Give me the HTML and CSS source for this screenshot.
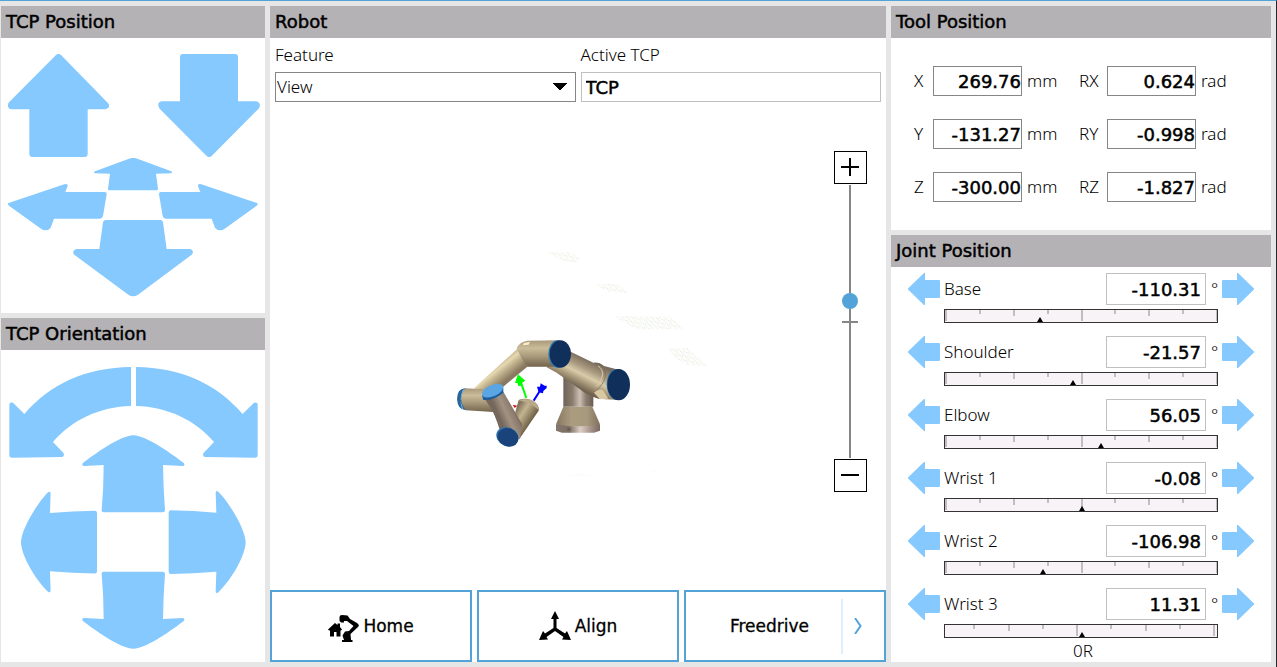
FILE: index.html
```html
<!DOCTYPE html>
<html lang="en">
<head>
<meta charset="utf-8">
<title>Move</title>
<link rel="stylesheet" href="styles.css">
</head>
<body>
<svg class="defs" aria-hidden="true">
  <symbol id="jog" viewBox="0 0 32 32"><path d="M0 15.500L16 0H17V7H31Q32 7 32 8V24Q32 25 31 25H17V32H16L0 16.500Z"/></symbol>
  <symbol id="ticks" viewBox="1 0 272 12" preserveAspectRatio="none"><path d="M1 0h2v11h-2zM35 0h2v4h-2zM69 0h2v6h-2zM103 0h2v4h-2zM137 0h2v11h-2zM170 0h2v4h-2zM204 0h2v6h-2zM238 0h2v4h-2zM272 0h1v11h-1z"/></symbol>
  <symbol id="ticks-wrap" viewBox="1 0 272 12" preserveAspectRatio="none"><path d="M29 0h2v4h-2zM64 0h2v6h-2zM98 0h2v4h-2zM132 0h2v11h-2zM166 0h2v4h-2zM201 0h2v6h-2zM235 0h2v4h-2zM269 0h2v11h-2z"/></symbol>
</svg>
<main class="screen">
  <div class="column">
    <section class="panel">
      <h2 class="panel-title">TCP Position</h2>
      <div class="pad-position">
        <div class="pad-row">
          <button class="arrow z-up" aria-label="Z up"><svg viewBox="24 162 303 309"><path d="M168 165Q175 158 183 165L323 308Q330 316 326 322Q322 328 314 328H263V462Q263 471 254 471H97Q88 471 88 462V328H35Q27 328 24 320Q23 312 27 307Z"/></svg></button>
          <button class="arrow z-down" aria-label="Z down"><svg viewBox="474 162 306 309"><path d="M620 468Q627 475 635 468L776 326Q782 318 778 310Q774 304 767 304H714V171Q714 162 705 162H549Q540 162 540 171V304H487Q477 304 475 312Q474 320 479 326Z"/></svg></button>
        </div>
        <div class="pad-cross">
          <button class="arrow y-away" aria-label="Away"><svg viewBox="282 474 234 99"><path d="M391 475Q399 472 408 475L514 514Q518 517 514 520L468 521L474 566Q474 571 469 571H328Q323 571 324 566L330 521L285 520Q279 518 285 514Z"/></svg></button>
          <button class="arrow x-left" aria-label="Left"><svg viewBox="24 552 297 141"><path d="M26 609L193 553Q204 550 203 558L196 576H314Q321 577 320 583L309 648Q307 656 299 656H162L152 683Q146 691 136 691Q129 691 124 687L27 617Q21 612 26 609Z"/></svg></button>
          <button class="arrow x-right" aria-label="Right"><svg viewBox="474 552 300 141"><path transform="translate(797 0) scale(-1 1)" d="M26 609L193 553Q204 550 203 558L196 576H314Q321 577 320 583L309 648Q307 656 299 656H162L152 683Q146 691 136 691Q129 691 124 687L27 617Q21 612 26 609Z"/></svg></button>
          <button class="arrow y-near" aria-label="Towards"><svg viewBox="219 660 360 231"><path d="M318 660H481Q488 660 489 667L500 747H568Q578 748 579 757Q578 762 574 765L414 884Q399 894 385 884L224 765Q218 761 220 755Q222 748 231 747H298L309 667Q311 660 318 660Z"/></svg></button>
        </div>
      </div>
    </section>
    <section class="panel grow">
      <h2 class="panel-title">TCP Orientation</h2>
      <div class="pad-orientation">
        <button class="arrow roll-left" aria-label="Rotate counterclockwise"><svg viewBox="27 156 366 273"><path d="M393 156V273C300 275 215 315 159 381L191 415Q194 424 186 426L36 428Q28 428 28 420V268Q29 260 39 263L73 297C150 207 260 157 393 156Z"/></svg></button>
        <button class="arrow roll-right" aria-label="Rotate clockwise"><svg viewBox="408 156 366 273"><path transform="translate(801 0) scale(-1 1)" d="M393 156V273C300 275 215 315 159 381L191 415Q194 424 186 426L36 428Q28 428 28 420V268Q29 260 39 263L73 297C150 207 260 157 393 156Z"/></svg></button>
        <button class="arrow tilt-up" aria-label="Tilt up"><svg viewBox="246 360 309 234"><path d="M400 361C440 362 520 420 552 445Q556 452 548 453L489 450Q490 520 495 585Q495 592 488 592H311Q304 592 305 585Q311 520 311 450L253 453Q244 453 248 445C280 420 360 362 400 361Z"/></svg></button>
        <button class="arrow tilt-left" aria-label="Tilt left"><svg viewBox="63 528 234 306"><path d="M63 682C64 640 115 560 145 530Q153 525 153 533L151 593Q220 587 287 586Q294 586 294 593V770Q294 777 287 777Q220 776 151 770L153 828Q153 836 146 833C110 800 64 725 63 682Z"/></svg></button>
        <button class="arrow tilt-right" aria-label="Tilt right"><svg viewBox="504 528 234 306"><path transform="translate(800 0) scale(-1 1)" d="M63 682C64 640 115 560 145 530Q153 525 153 533L151 593Q220 587 287 586Q294 586 294 593V770Q294 777 287 777Q220 776 151 770L153 828Q153 836 146 833C110 800 64 725 63 682Z"/></svg></button>
        <button class="arrow tilt-down" aria-label="Tilt down"><svg viewBox="246 768 309 234"><path transform="translate(0 1362) scale(1 -1)" d="M400 361C440 362 520 420 552 445Q556 452 548 453L489 450Q490 520 495 585Q495 592 488 592H311Q304 592 305 585Q311 520 311 450L253 453Q244 453 248 445C280 420 360 362 400 361Z"/></svg></button>
      </div>
    </section>
  </div>

  <section class="panel robot">
    <h2 class="panel-title">Robot</h2>
    <div class="fields">
      <label for="feature">Feature</label>
      <label for="tcp">Active TCP</label>
      <select id="feature" class="select"><option>View</option></select>
      <input id="tcp" class="tcp" type="text" value="TCP" readonly>
    </div>
    <div class="view">
      <svg class="scene" viewBox="0 0 616 488" role="img" aria-label="Robot arm">
        <defs>
          <linearGradient id="g-col"><stop offset="0" stop-color="#6f6358"/><stop offset=".3" stop-color="#8a7c6d"/><stop offset=".55" stop-color="#cdbfb4"/><stop offset=".75" stop-color="#8d7f70"/><stop offset="1" stop-color="#6a5c50"/></linearGradient>
          <linearGradient id="g-cone"><stop offset="0" stop-color="#857760"/><stop offset=".35" stop-color="#ab9c80"/><stop offset=".7" stop-color="#a89a7e"/><stop offset="1" stop-color="#80715c"/></linearGradient>
          <linearGradient id="g-flange"><stop offset="0" stop-color="#85776d"/><stop offset=".3" stop-color="#7c6e62"/><stop offset=".55" stop-color="#dccdc6"/><stop offset=".8" stop-color="#a39086"/><stop offset="1" stop-color="#79695e"/></linearGradient>
          <linearGradient id="g-elbow" x2="0" y2="1"><stop offset="0" stop-color="#a8997b"/><stop offset=".3" stop-color="#cbbd98"/><stop offset=".6" stop-color="#a89a7b"/><stop offset="1" stop-color="#73644d"/></linearGradient>
          <linearGradient id="g-fore" gradientUnits="userSpaceOnUse" x1="160" y1="370" x2="200" y2="420"><stop offset="0" stop-color="#a6987a"/><stop offset=".35" stop-color="#e6d8b0"/><stop offset=".65" stop-color="#b9aa87"/><stop offset="1" stop-color="#887960"/></linearGradient>
          <linearGradient id="g-upper" gradientUnits="userSpaceOnUse" x1="440" y1="355" x2="400" y2="435"><stop offset="0" stop-color="#796b5b"/><stop offset=".3" stop-color="#a7987e"/><stop offset=".55" stop-color="#d9ccaa"/><stop offset=".72" stop-color="#b1a283"/><stop offset="1" stop-color="#716350"/></linearGradient>
          <linearGradient id="g-wrist" gradientUnits="userSpaceOnUse" x1="170" y1="515" x2="225" y2="490"><stop offset="0" stop-color="#75675b"/><stop offset=".4" stop-color="#a19283"/><stop offset=".75" stop-color="#8a7b6c"/><stop offset="1" stop-color="#665749"/></linearGradient>
          <linearGradient id="g-tool" gradientUnits="userSpaceOnUse" x1="228" y1="510" x2="275" y2="540"><stop offset="0" stop-color="#857760"/><stop offset=".4" stop-color="#c4b590"/><stop offset="1" stop-color="#716349"/></linearGradient>
          <pattern id="speckle" width="18" height="12" patternUnits="userSpaceOnUse" patternTransform="rotate(11)"><path fill="#f8efa8" d="M1 1h3v3h-3zM10 7h3v3h-3z"/><path fill="#bfeaf8" d="M7 2h3v3h-3zM15 9h3v3h-3z"/><path fill="#f7d4e8" d="M4 8h3v3h-3z"/></pattern>
        </defs>
        <g transform="translate(170 138) scale(.33333)">
          <g fill="url(#speckle)">
            <path d="M320 37L390 37L420 54L410 68L375 64L345 50Z"/>
            <path d="M466 132L530 132L565 158L505 156Z"/>
            <path d="M520 228L690 230L730 268L590 268Z"/>
            <path d="M685 324L742 324L770 352L805 380L740 374L700 350Z"/>
            <path d="M380 703L430 701L470 708H400ZM610 693L650 690L660 698Z" opacity=".5"/>
          </g>
          <path fill="url(#g-col)" d="M370 400L460 420V500H370Z"/>
          <path fill="url(#g-cone)" d="M370 500H457L480 553L465 560H365L348 553Z"/>
          <path fill="url(#g-flange)" d="M348 553Q414 566 480 553V572L462 578H366L348 572Z"/>
          <path fill="#6b5d50" d="M382 564h10v8h-10z"/>
          <path fill="url(#g-upper)" d="M392 335L460 368Q478 366 492 378L530 388L535 480L475 476Q440 466 420 448L350 398L320 382L330 360Z"/>
          <path fill="#d8c9a2" d="M462 458Q485 440 492 455L505 476L480 478Z"/>
          <path fill="none" stroke="#75685a" stroke-width="2" d="M466 370Q492 370 496 396Q500 425 470 450"/>
          <path fill="none" stroke="#d7c8a5" stroke-width="3" d="M474 378Q488 385 488 405Q484 425 468 440"/>
          <ellipse cx="530" cy="433" rx="30" ry="46" fill="#2d79b4"/>
          <ellipse cx="536" cy="434" rx="34" ry="47" fill="#10305b"/>
          <path fill="url(#g-fore)" d="M102 445L234 325L262 380L190 440L150 462Z"/>
          <path fill="url(#g-elbow)" d="M230 325Q238 306 262 302L355 301V380H262Q248 362 240 345Z"/>
          <path fill="#f7ecc8" d="M252 309L270 305L266 314L248 316Z"/>
          <ellipse cx="353" cy="342" rx="28" ry="41" fill="#2d79b4"/>
          <ellipse cx="361" cy="342" rx="32" ry="41" fill="#10305b"/>
          <path fill="#28659a" d="M78 445Q52 444 51 477Q53 510 78 511L84 478Z"/>
          <path fill="#7ab5e6" d="M68 450L74 447L60 478L70 508L66 506Q56 480 68 450Z"/>
          <path fill="url(#g-elbow)" d="M76 445L140 448L160 516L78 511Q50 478 76 445Z"/>
          <path fill="#d61515" d="M218 494L232 497L224 504Z"/>
          <path fill="url(#g-tool)" d="M236 480Q252 472 276 480Q298 492 296 512L238 597L215 560L230 500Z"/>
          <path fill="#b8a988" d="M236 481Q262 470 285 487Q296 498 296 510Q274 490 236 481Z"/>
          <path fill="url(#g-wrist)" d="M132 474L190 455L246 552L240 598L180 572Q164 520 150 500Z"/>
          <path fill="#1c5d9b" d="M126 466L130 480Q160 482 190 458V442Z"/>
          <ellipse cx="158" cy="452" rx="34" ry="17" transform="rotate(-24 158 452)" fill="#5aa5e3"/>
          <ellipse cx="202" cy="590" rx="34" ry="28" transform="rotate(24 202 590)" fill="#2e73ae"/>
          <ellipse cx="204" cy="592" rx="32" ry="27" transform="rotate(24 204 592)" fill="#19437a"/>
          <path stroke="#0f0" stroke-width="6" fill="#0f0" d="M259 474L242 425"/><path fill="#0f0" d="M234 403L256 422L246 428L245 437L235 438L233 430L225 428Z"/>
          <path stroke="#00f" stroke-width="6" d="M281 482L299 454"/><path fill="#00f" d="M302 430L314 437H320V444L310 453L309 460L296 457L291 440H300Z"/>
        </g>
      </svg>
      <div class="zoom">
        <button class="zoom-btn" aria-label="Zoom in"><svg viewBox="0 0 18 18"><path d="M0 9H18M9 0V18"/></svg></button>
        <input class="zoom-range" type="range" min="0" max="100" value="58" aria-label="Zoom">
        <button class="zoom-btn" aria-label="Zoom out"><svg viewBox="0 0 18 18"><path d="M0 9H18"/></svg></button>
      </div>
    </div>
    <div class="actions">
      <button class="action"><svg class="icon-home" viewBox="0 0 31 27"><path d="M0 14.500L7 8L9.500 10V8.500H12V12L14 14.500L13 15.500H12.500V21.500H8.500V17H6V21.500H2V15.500H1Z"/><path d="M11.500 2Q11.500 0 14 0L19.500 .500L22 4L29 8Q32 10 30 12L22.500 19L23 25H24.500V27H14V25H16L14.500 20.500L17 16.500L21 16L25.500 11L19 6H16V7.500H13L11.500 6Z"/></svg>Home</button>
      <button class="action"><svg class="icon-align" viewBox="0 0 32 30"><path d="M16 0L20 8H17.500V17L26 22.500L28 20L32 29L23 28.500L24.500 26L16 20L7.500 26L9 28.500L0 29L4 20L6 22.500L14.500 17V8H12Z"/></svg>Align</button>
      <button class="action split"><span class="split-label">Freedrive</span><svg class="chevron" viewBox="0 0 8 16"><path d="M1 0L6.500 8L1 16"/></svg></button>
    </div>
  </section>

  <div class="column">
    <section class="panel">
      <h2 class="panel-title">Tool Position</h2>
      <div class="tool">
        <label for="x">X</label><input id="x" value="269.76"><span class="unit">mm</span>
        <label for="rx">RX</label><input id="rx" value="0.624"><span class="unit">rad</span>
        <label for="y">Y</label><input id="y" value="-131.27"><span class="unit">mm</span>
        <label for="ry">RY</label><input id="ry" value="-0.998"><span class="unit">rad</span>
        <label for="z">Z</label><input id="z" value="-300.00"><span class="unit">mm</span>
        <label for="rz">RZ</label><input id="rz" value="-1.827"><span class="unit">rad</span>
      </div>
    </section>
    <section class="panel grow">
      <h2 class="panel-title">Joint Position</h2>
      <div class="joints">
        <div class="joint">
          <button class="jog" aria-label="Base minus"><svg><use href="#jog"/></svg></button>
          <label for="j0">Base</label><input id="j0" value="-110.31"><span class="deg">°</span>
          <button class="jog plus" aria-label="Base plus"><svg><use href="#jog"/></svg></button>
          <div class="bar"><svg class="ticks"><use href="#ticks"/></svg><i class="mark" style="left:35%"></i></div>
        </div>
        <div class="joint">
          <button class="jog" aria-label="Shoulder minus"><svg><use href="#jog"/></svg></button>
          <label for="j1">Shoulder</label><input id="j1" value="-21.57"><span class="deg">°</span>
          <button class="jog plus" aria-label="Shoulder plus"><svg><use href="#jog"/></svg></button>
          <div class="bar"><svg class="ticks"><use href="#ticks"/></svg><i class="mark" style="left:47%"></i></div>
        </div>
        <div class="joint">
          <button class="jog" aria-label="Elbow minus"><svg><use href="#jog"/></svg></button>
          <label for="j2">Elbow</label><input id="j2" value="56.05"><span class="deg">°</span>
          <button class="jog plus" aria-label="Elbow plus"><svg><use href="#jog"/></svg></button>
          <div class="bar"><svg class="ticks"><use href="#ticks"/></svg><i class="mark" style="left:57.500%"></i></div>
        </div>
        <div class="joint">
          <button class="jog" aria-label="Wrist 1 minus"><svg><use href="#jog"/></svg></button>
          <label for="j3">Wrist 1</label><input id="j3" value="-0.08"><span class="deg">°</span>
          <button class="jog plus" aria-label="Wrist 1 plus"><svg><use href="#jog"/></svg></button>
          <div class="bar"><svg class="ticks"><use href="#ticks"/></svg><i class="mark" style="left:50.400%"></i></div>
        </div>
        <div class="joint">
          <button class="jog" aria-label="Wrist 2 minus"><svg><use href="#jog"/></svg></button>
          <label for="j4">Wrist 2</label><input id="j4" value="-106.98"><span class="deg">°</span>
          <button class="jog plus" aria-label="Wrist 2 plus"><svg><use href="#jog"/></svg></button>
          <div class="bar"><svg class="ticks"><use href="#ticks"/></svg><i class="mark" style="left:36%"></i></div>
        </div>
        <div class="joint">
          <button class="jog" aria-label="Wrist 3 minus"><svg><use href="#jog"/></svg></button>
          <label for="j5">Wrist 3</label><input id="j5" value="11.31"><span class="deg">°</span>
          <button class="jog plus" aria-label="Wrist 3 plus"><svg><use href="#jog"/></svg></button>
          <div class="bar"><svg class="ticks"><use href="#ticks-wrap"/></svg><i class="mark" style="left:50.400%"></i></div>
        </div>
        <p class="turns">0R</p>
      </div>
    </section>
  </div>
</main>
</body>
</html>
```
FILE: styles.css
```css
* { box-sizing: border-box; }

body {
  margin: 0;
  background: #e6e6e6;
  color: #000;
  font: 300 17px/24px "Noto Sans", "DejaVu Sans", sans-serif;
}

button, input, select { font: inherit; color: inherit; margin: 0; border-radius: 0; }
button { padding: 0; border: 0; background: none; cursor: pointer; }
svg { display: block; }
.defs { position: absolute; width: 0; height: 0; }

.screen {
  display: grid;
  grid-template-columns: 264fr 616fr 380fr;
  gap: 5px;
  min-height: 100vh;
  padding: 5px 5px 5px 1px;
  border-top: 1px solid #4fa3d8;
  border-right: 1px solid #26282c;
}

.column { display: flex; flex-direction: column; gap: 5px; min-width: 0; }
.panel { background: #fff; min-width: 0; }
.grow { flex: 1; }

.panel-title {
  margin: 0;
  padding: 0 5px;
  background: #b4b2b5;
  font-family: "DejaVu Sans", sans-serif;
  font-size: 18px;
  font-weight: 400;
  line-height: 32px;
  -webkit-text-stroke: 0.5px #000;
}

/* Arrow pads */
.arrow svg { width: 100%; height: 100%; fill: #85c9ff; }
.pad-position { padding: 16px 5px 16px 7px; }
.pad-row { display: flex; justify-content: space-between; height: 104px; }
.z-up { width: 101px; height: 103px; }
.z-down { width: 102px; height: 103px; }
.pad-cross {
  display: grid;
  grid-template-columns: 65px 21px 13px 51px 14px 21px 65px;
  grid-template-rows: 26px 7px 29px 11px 66px;
}
.y-away { grid-area: 1 / 3 / 3 / 6; }
.x-left { grid-area: 2 / 1 / 5 / 4; }
.x-right { grid-area: 2 / 5 / 5 / 8; }
.y-near { grid-area: 4 / 2 / 6 / 7; }

.pad-orientation {
  display: grid;
  grid-template-columns: 12px 61px 16px 33px 5px 32px 17px 61px 12px;
  grid-template-rows: 68px 23px 33px 22px 58px 22px 56px;
  justify-content: center;
  padding: 17px 0 13px;
}
.roll-left { grid-area: 1 / 1 / 3 / 5; }
.roll-right { grid-area: 1 / 6 / 3 / 10; }
.tilt-up { grid-area: 2 / 3 / 5 / 8; }
.tilt-left { grid-area: 4 / 2 / 7 / 4; }
.tilt-right { grid-area: 4 / 7 / 7 / 9; }
.tilt-down { grid-area: 6 / 3 / 8 / 8; }

/* Robot view */
.robot { display: flex; flex-direction: column; }
.fields {
  display: grid;
  grid-template-columns: 1fr 1fr;
  gap: 5px;
  padding: 5px 5px 0;
}
.select {
  height: 30px;
  padding: 0 1px;
  border: 1px solid #868686;
  appearance: none;
  background: linear-gradient(to bottom right, #000 50%, transparent 50%) right 7px center / 8px 8px no-repeat,
    linear-gradient(to bottom left, #000 50%, transparent 50%) right 15px center / 8px 8px no-repeat, #fff;
}
.tcp {
  height: 30px;
  min-width: 0;
  padding: 0 4px;
  border: 1px solid #c0c0c0;
}
.tcp, .tool input, .joint input {
  background: #fff;
  font-family: "DejaVu Sans", sans-serif;
  font-size: 18px;
  font-weight: 400;
  -webkit-text-stroke: 0.5px #000;
}
.view { flex: 1; display: grid; min-height: 0; }
.scene { grid-area: 1 / 1; width: 100%; height: 100%; }
.zoom {
  grid-area: 1 / 1;
  justify-self: end;
  display: flex;
  flex-direction: column;
  gap: 1px;
  padding: 49px 19px 0 0;
}
.zoom-btn {
  display: flex;
  justify-content: flex-start;
  align-items: flex-start;
  width: 33px;
  height: 33px;
  padding: 6px;
  border: 1px solid #000;
  background: #fff;
}
.zoom-btn svg { width: 18px; height: 18px; stroke: #000; stroke-width: 2; }
.zoom-range {
  appearance: none;
  writing-mode: vertical-lr;
  direction: rtl;
  width: 16px;
  height: 273px;
  margin-left: 8px;
  background: linear-gradient(#868686, #868686) center / 2px 100% no-repeat,
    linear-gradient(#868686, #868686) center / 16px 2px no-repeat;
}
.zoom-range::-webkit-slider-thumb {
  appearance: none;
  width: 16px;
  height: 16px;
  border-radius: 50%;
  background: #54a3d8;
}

.actions { display: grid; grid-template-columns: repeat(3, 1fr); gap: 5px; }
.action {
  display: flex;
  align-items: center;
  justify-content: center;
  gap: 4px;
  height: 72px;
  border: 2px solid #54a3d8;
  background: #fff;
  font-family: "DejaVu Sans", sans-serif;
  font-weight: 400;
  -webkit-text-stroke: 0.3px #000;
}
.icon-home { width: 31px; height: 27px; margin-top: 4px; }
.icon-align { width: 32px; height: 30px; }
.split { gap: 0; }
.split-label {
  flex: 1;
  padding-left: 12px;
  border-right: 2px solid #e0edfa;
  line-height: 55px;
}
.chevron { width: 8px; height: 16px; margin: 0 22px 0 11px; fill: none; stroke: #54a3d8; stroke-width: 2; }

/* Tool position */
.tool {
  display: grid;
  grid-template-columns: 19px 89px 57px 28px 89px auto;
  row-gap: 23px;
  align-items: center;
  padding: 28px 23px;
}
.tool input, .joint input { width: 100%; text-align: right; }
.tool input { height: 30px; padding: 0; border: 1px solid #868686; }
.unit { padding-left: 5px; }

/* Joint position */
.joints { padding: 6px 17px 0; }
.joint {
  display: grid;
  grid-template-columns: 32px 1fr 100px 8px 32px;
  grid-template-rows: 32px 14px;
  gap: 4px;
  align-items: center;
  margin-bottom: 13px;
}
.joint input { height: 32px; padding: 0 4px; border: 1px solid #c0c0c0; }
.deg { padding-left: 1px; }
.jog svg { width: 32px; height: 32px; fill: #85c9ff; }
.plus svg { transform: scaleX(-1); }
.bar {
  grid-column: 2 / 5;
  position: relative;
  height: 14px;
  border: 1px solid #333;
  background: #f7f3f7;
}
.ticks { width: 100%; height: 12px; fill: #c0bec0; }
.mark {
  position: absolute;
  bottom: 0;
  margin-left: -3px;
  border: 3px solid transparent;
  border-top: 0;
  border-bottom: 5px solid #000;
}
.turns { margin: -10px 0 0; padding-left: 4px; line-height: 20px; text-align: center; }
```
